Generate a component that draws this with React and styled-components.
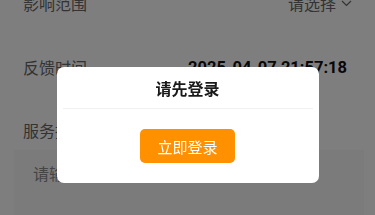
import React from "react";
import styled, { createGlobalStyle } from "styled-components";

const GlobalStyle = createGlobalStyle`
  html, body {
    margin: 0;
    padding: 0;
    background: #fdfdfd;
    font-family: "Noto Sans CJK SC", "Noto Sans", Roboto, sans-serif;
    overflow: hidden;
  }
`;

const Page = styled.div`
  width: 375px;
  height: 215px;
  overflow: hidden;
  background: #fdfdfd;
`;

const Form = styled.div`
  margin-top: -29px;
  padding: 0 24px 0 23px;
`;

const Row = styled.div`
  display: flex;
  align-items: center;
  justify-content: space-between;
  height: 64px;
`;

const Label = styled.span`
  font-size: 16px;
  color: #666;
`;

const Select = styled.span`
  display: flex;
  align-items: center;
  gap: 5px;
  font-size: 16px;
  color: #666;
  margin-right: -1px;
`;

const Value = styled.span`
  font-family: Roboto, "Noto Sans", sans-serif;
  font-weight: 700;
  font-size: 16.5px;
  color: #111;
  margin-right: 4px;
`;

const Block = styled.div`
  padding-top: 19px;
`;

const BlockLabel = styled.div`
  font-size: 16px;
  color: #666;
  line-height: 24px;
`;

const TextBox = styled.div`
  margin: 8px -13px 0 -9px;
  height: 80px;
  background: #f7f7f7;
  padding: 11px 19px;
  font-size: 16px;
  line-height: 24px;
  color: #8a8a8a;
`;

const Overlay = styled.div`
  position: fixed;
  inset: 0;
  background: rgba(0, 0, 0, 0.5);
  display: flex;
  align-items: flex-start;
  justify-content: center;
  padding-top: 67px;
`;

const Dialog = styled.div`
  width: 262px;
  background: #fff;
  border-radius: 7px;
  overflow: hidden;
`;

const Title = styled.div`
  height: 41px;
  display: flex;
  align-items: center;
  justify-content: center;
  font-size: 16px;
  font-weight: 700;
  color: #1a1a1a;
  border-bottom: 1px solid #f0f0f0;
  margin: 0 6px;
`;

const Body = styled.div`
  display: flex;
  justify-content: center;
  padding: 20px 0 20px;
`;

const LoginButton = styled.button`
  display: block;
  width: 95px;
  height: 34px;
  border: none;
  border-radius: 5px;
  background: #ff9000;
  color: #fff;
  font-family: inherit;
  font-size: 15px;
  padding: 0;
`;

const Chevron = () => (
  <svg width="11" height="7" viewBox="0 0 11 7" fill="none">
    <path d="M1 1l4.5 4.5L10 1" stroke="#666" strokeWidth="1.2" />
  </svg>
);

export default function App() {
  return (
    <Page>
      <GlobalStyle />
      <Form>
        <Row>
          <Label>影响范围</Label>
          <Select>
            请选择
            <Chevron />
          </Select>
        </Row>
        <Row>
          <Label>反馈时间</Label>
          <Value>2025-04-07 21:57:18</Value>
        </Row>
        <Block>
          <BlockLabel>服务描述</BlockLabel>
          <TextBox>请输入服务描述</TextBox>
        </Block>
      </Form>
      <Overlay>
        <Dialog>
          <Title>请先登录</Title>
          <Body>
            <LoginButton>立即登录</LoginButton>
          </Body>
        </Dialog>
      </Overlay>
    </Page>
  );
}
